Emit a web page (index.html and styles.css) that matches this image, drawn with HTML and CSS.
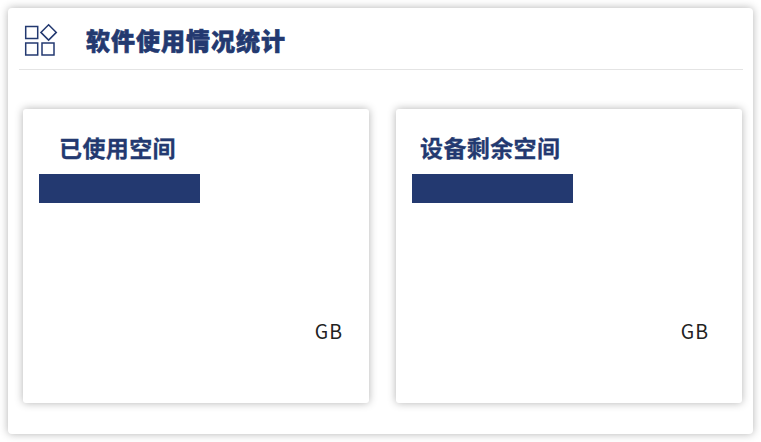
FILE: index.html
```html
<!DOCTYPE html>
<html lang="zh-CN">
<head>
<meta charset="utf-8">
<title>软件使用情况统计</title>
<link rel="stylesheet" href="styles.css">
</head>
<body>
<main class="panel">
  <header class="panel-header">
    <svg class="panel-icon" width="34" height="34" viewBox="0 0 34 34" aria-hidden="true">
      <rect x="1.7" y="3.5" width="12" height="12"/>
      <rect x="1.7" y="20" width="12" height="12"/>
      <rect x="18" y="20" width="12" height="12"/>
      <path d="M24.6 1.7 32.3 9.4 24.6 17.1 16.9 9.4Z"/>
    </svg>
    <h1 class="panel-title">软件使用情况统计</h1>
  </header>
  <div class="cards">
    <section class="card">
      <h2 class="card-title">已使用空间</h2>
      <div class="bar"></div>
      <p class="unit">GB</p>
    </section>
    <section class="card card-free">
      <h2 class="card-title">设备剩余空间</h2>
      <div class="bar"></div>
      <p class="unit">GB</p>
    </section>
  </div>
</main>
</body>
</html>
```
FILE: styles.css
```css
* { box-sizing: border-box; }
body { margin: 0; padding: 8px; background: #fff; font-family: "Noto Sans CJK SC", sans-serif; }
h1, h2, p { margin: 0; }
.panel { width: 745px; height: 426px; padding: 0 11px; border-radius: 4px; background: #fff; box-shadow: 0 0 9px rgba(0,0,0,.3); }
.panel-header { display: flex; height: 62px; width: 724px; padding: 14px 0 0 5px; border-bottom: 1px solid #e4e4e4; }
.panel-icon { margin-top: 1px; fill: none; stroke: #233970; stroke-width: 1.5; }
.panel-title { margin: 0 0 0 28px; font-size: 24px; line-height: 36px; letter-spacing: 1px; font-weight: 900; -webkit-text-stroke: .6px #233970; color: #233970; white-space: nowrap; }
.cards { display: flex; gap: 27px; padding: 39px 0 0 4px; }
.card { flex: none; width: 346px; height: 294px; padding: 20px 16px 0; border-radius: 3px; background: #fff; box-shadow: 0 0 9px rgba(0,0,0,.3); }
.card-title { padding-left: 20px; font-size: 23px; line-height: 36px; letter-spacing: .4px; font-weight: 700; -webkit-text-stroke: .3px #233970; color: #233970; }
.card-free .card-title { padding-left: 8px; }
.bar { width: 161px; height: 29px; margin-top: 9px; background: #233970; }
.unit { margin-top: 113px; padding-right: 10px; text-align: right; font-size: 19.5px; line-height: 30px; letter-spacing: 1px; color: #222; }
.card-free .unit { padding-right: 17px; }
```
